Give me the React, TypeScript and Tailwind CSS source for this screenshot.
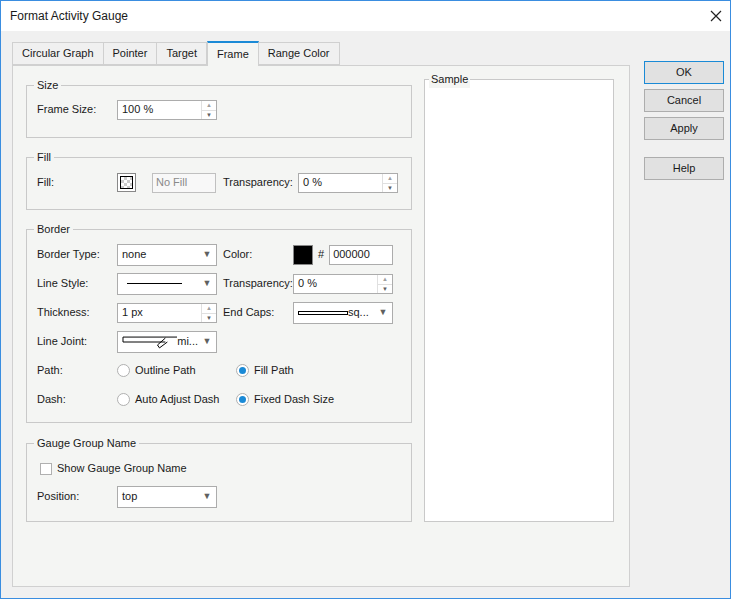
import React from 'react'

const font = { fontFamily: '"Liberation Sans", Arial, sans-serif' }

function Spin({ value, w = 'w-[100px]' }: { value: string; w?: string }) {
  return (
    <div className={`${w} h-[20px] bg-white border border-[#acacac] flex items-center`}>
      <span className="flex-1 pl-[4px]">{value}</span>
      <div className="w-[15px] h-full flex flex-col border-l border-[#e0e0e0]">
        <div className="flex-1 flex items-center justify-center text-[6px] text-[#a0a0a0] border-b border-[#e0e0e0]">▲</div>
        <div className="flex-1 flex items-center justify-center text-[6px] text-[#606060]">▼</div>
      </div>
    </div>
  )
}

function Combo({ children, w = 'w-[100px]' }: { children: React.ReactNode; w?: string }) {
  return (
    <div className={`${w} h-[22px] bg-white border border-[#acacac] flex items-center`}>
      <div className="flex-1 pl-[4px] flex items-center overflow-hidden whitespace-nowrap">{children}</div>
      <div className="w-[18px] flex items-center justify-center text-[#606060] text-[9px]">▼</div>
    </div>
  )
}

function Group({ title, className, children }: { title: string; className?: string; children: React.ReactNode }) {
  return (
    <fieldset className={`border border-[#c9c9c9] px-[10px] ${className ?? ''}`}>
      <legend className="px-[3px] -ml-[3px]">{title}</legend>
      {children}
    </fieldset>
  )
}

function Radio({ on, label }: { on?: boolean; label: string }) {
  return (
    <div className="flex items-center gap-[5px]">
      <span className="w-[13px] h-[13px] rounded-full border border-[#b0b0b0] bg-white flex items-center justify-center">
        {on && <span className="w-[7px] h-[7px] rounded-full bg-[#1a8ad6]" />}
      </span>
      {label}
    </div>
  )
}

const Row = ({ children }: { children: React.ReactNode }) => <div className="flex items-center h-[22px]">{children}</div>
const L1 = ({ t }: { t: string }) => <span className="w-[80px]">{t}</span>
const L2 = ({ t }: { t: string }) => <span className="w-[76px] pl-[6px] whitespace-nowrap">{t}</span>

export default function App() {
  const tabs = ['Circular Graph', 'Pointer', 'Target', 'Frame', 'Range Color']
  return (
    <div style={font} className="w-[731px] h-[599px] bg-[#f0f0f0] text-[11px] text-[#1a1a1a] border border-[#3a8de0] flex flex-col overflow-hidden">
      <div className="h-[30px] bg-white flex items-center justify-between pl-[9px] pr-[8px] text-[12px]">
        <span>Format Activity Gauge</span>
        <svg width="12" height="12" viewBox="0 0 12 12"><path d="M1 1L11 11M11 1L1 11" stroke="#222" strokeWidth="1.2" /></svg>
      </div>
      <div className="flex flex-1 pl-[11px] pt-[9px]">
        <div className="flex flex-col w-[618px]">
          <div className="flex h-[25px] items-end">
            {tabs.map(t => (
              <div
                key={t}
                className={
                  t === 'Frame'
                    ? 'h-[25px] px-[9px] flex items-center bg-[#f4f5f3] border-t-2 border-t-[#1a8ad6] border-x border-[#d0d0d0] -mb-px z-10'
                    : 'h-[23px] px-[9px] flex items-center bg-[#f0f0f0] border border-[#d0d0d0] -ml-px first:ml-0'
                }
              >
                {t}
              </div>
            ))}
          </div>
          <div className="h-[522px] bg-[#f4f5f3] border border-[#d0d0d0] flex gap-[12px] pl-[13px] pt-[11px]">
            <div className="w-[386px] flex flex-col">
              <Group title="Size" className="h-[61px]">
                <div className="pt-[5px]"><Row><L1 t="Frame Size:" /><Spin value="100 %" /></Row></div>
              </Group>
              <Group title="Fill" className="h-[61px] mt-[11px]">
                <div className="pt-[6px]">
                  <Row>
                    <L1 t="Fill:" />
                    <span className="w-[19px] h-[19px] border border-[#888] p-[2px] bg-white">
                      <span className="block w-full h-full border border-black bg-[repeating-conic-gradient(#ccc_0_25%,#fff_0_50%)] bg-[length:6px_6px]" />
                    </span>
                    <span className="ml-[16px] w-[64px] h-[20px] border border-[#c0c0c0] bg-[#f8f8f8] text-[#8a8a8a] pl-[3px] flex items-center">No Fill</span>
                    <span className="w-[82px] pl-[7px]">Transparency:</span>
                    <Spin value="0 %" />
                  </Row>
                </div>
              </Group>
              <Group title="Border" className="h-[202px] mt-[11px]">
                <div className="flex flex-col gap-[7px] pt-[6px]">
                  <Row><L1 t="Border Type:" /><Combo>none</Combo><L2 t="Color:" /><span className="w-[20px] h-[20px] bg-black border border-[#888]" /><span className="px-[5px]">#</span><span className="w-[64px] h-[20px] bg-white border border-[#acacac] pl-[3px] flex items-center">000000</span></Row>
                  <Row><L1 t="Line Style:" /><Combo><span className="ml-[5px] w-[55px] h-px bg-black" /></Combo><L2 t="Transparency:" /><Spin value="0 %" /></Row>
                  <Row><L1 t="Thickness:" /><Spin value="1 px" /><L2 t="End Caps:" /><Combo><span className="w-[50px] h-[4px] border border-black" />sq...</Combo></Row>
                  <Row><L1 t="Line Joint:" /><Combo>
                    <svg width="56" height="16" viewBox="0 0 56 16"><path d="M1 3H56L58 3M1 3V8H44" fill="none" stroke="#000" /><path d="M44 4L36 11L38 14L46 8" fill="none" stroke="#000" /></svg>mi...
                  </Combo></Row>
                  <Row><L1 t="Path:" /><span className="w-[119px]"><Radio label="Outline Path" /></span><Radio on label="Fill Path" /></Row>
                  <Row><L1 t="Dash:" /><span className="w-[119px]"><Radio label="Auto Adjust Dash" /></span><Radio on label="Fixed Dash Size" /></Row>
                </div>
              </Group>
              <Group title="Gauge Group Name" className="h-[87px] mt-[12px]">
                <div className="flex flex-col gap-[6px] pt-[6px]">
                  <Row><span className="w-[12px] h-[12px] border border-[#b0b0b0] bg-white ml-[3px] mr-[5px]" />Show Gauge Group Name</Row>
                  <Row><L1 t="Position:" /><Combo>top</Combo></Row>
                </div>
              </Group>
            </div>
            <fieldset className="w-[190px] h-[451px] border border-[#c9c9c9] bg-white mt-[-6px] pl-[4px]">
              <legend className="px-[2px] bg-[#f4f5f3]">Sample</legend>
            </fieldset>
          </div>
        </div>
        <div className="flex flex-col ml-[14px] pt-[21px] w-[80px]">
          {['OK', 'Cancel', 'Apply'].map(b => (
            <div key={b} className={`h-[23px] mb-[5px] flex items-center justify-center bg-[#e1e1e1] border ${b === 'OK' ? 'border-[#1a8ad6]' : 'border-[#adadad]'}`}>{b}</div>
          ))}
          <div className="h-[23px] mt-[12px] flex items-center justify-center bg-[#e1e1e1] border border-[#adadad]">Help</div>
        </div>
      </div>
    </div>
  )
}
